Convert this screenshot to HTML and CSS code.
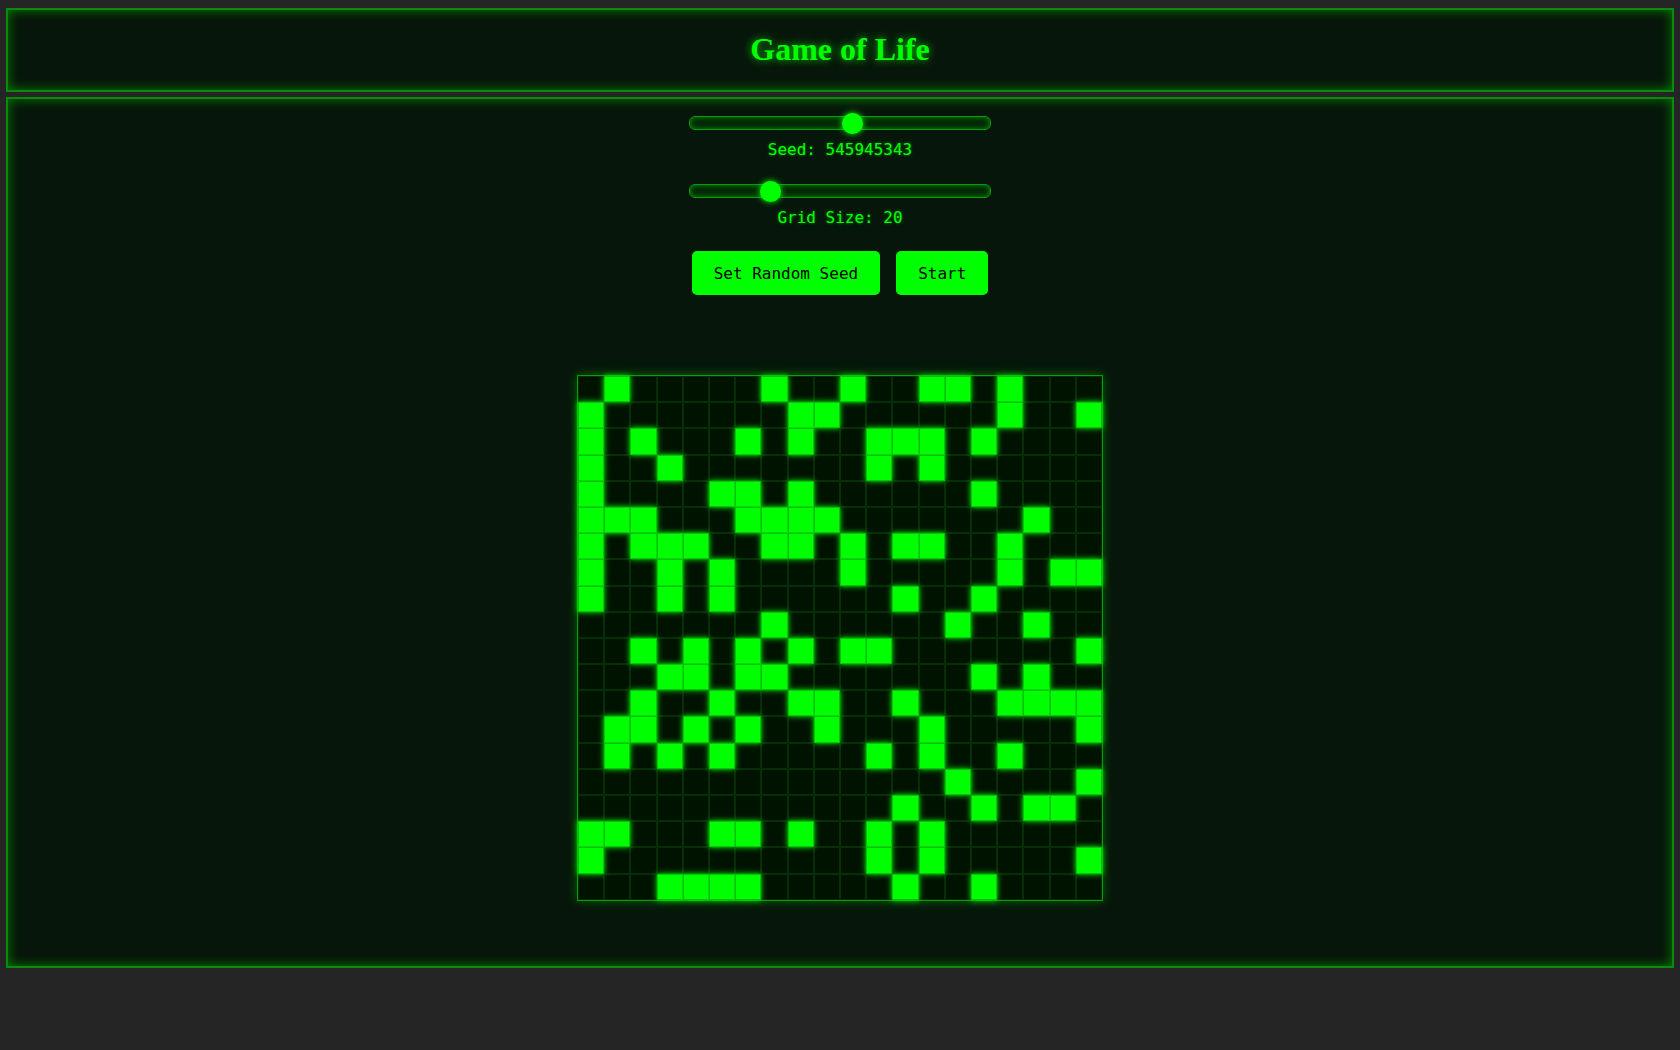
FILE: index.html
```html
<!DOCTYPE html>
<html lang="en">
<head>
<meta charset="utf-8">
<title>Game of Life</title>
<link rel="stylesheet" href="styles.css">
</head>
<body>
<header class="panel header">
  <h1 class="title">Game of Life</h1>
</header>
<main class="panel main">
  <div class="controls">
    <div class="slider-row"><input class="slider" type="range" min="0" max="1000000000" value="545945343"></div>
    <div class="label">Seed: 545945343</div>
    <div class="slider-row second"><input class="slider" type="range" min="10" max="50" value="20"></div>
    <div class="label">Grid Size: 20</div>
    <div class="buttons">
      <button class="btn">Set Random Seed</button>
      <button class="btn">Start</button>
    </div>
  </div>
  <div class="grid-wrap">
    <div class="grid">
<i class="c"></i><i class="c on"></i><i class="c"></i><i class="c"></i><i class="c"></i><i class="c"></i><i class="c"></i><i class="c on"></i><i class="c"></i><i class="c"></i><i class="c on"></i><i class="c"></i><i class="c"></i><i class="c on"></i><i class="c on"></i><i class="c"></i><i class="c on"></i><i class="c"></i><i class="c"></i><i class="c"></i>
<i class="c on"></i><i class="c"></i><i class="c"></i><i class="c"></i><i class="c"></i><i class="c"></i><i class="c"></i><i class="c"></i><i class="c on"></i><i class="c on"></i><i class="c"></i><i class="c"></i><i class="c"></i><i class="c"></i><i class="c"></i><i class="c"></i><i class="c on"></i><i class="c"></i><i class="c"></i><i class="c on"></i>
<i class="c on"></i><i class="c"></i><i class="c on"></i><i class="c"></i><i class="c"></i><i class="c"></i><i class="c on"></i><i class="c"></i><i class="c on"></i><i class="c"></i><i class="c"></i><i class="c on"></i><i class="c on"></i><i class="c on"></i><i class="c"></i><i class="c on"></i><i class="c"></i><i class="c"></i><i class="c"></i><i class="c"></i>
<i class="c on"></i><i class="c"></i><i class="c"></i><i class="c on"></i><i class="c"></i><i class="c"></i><i class="c"></i><i class="c"></i><i class="c"></i><i class="c"></i><i class="c"></i><i class="c on"></i><i class="c"></i><i class="c on"></i><i class="c"></i><i class="c"></i><i class="c"></i><i class="c"></i><i class="c"></i><i class="c"></i>
<i class="c on"></i><i class="c"></i><i class="c"></i><i class="c"></i><i class="c"></i><i class="c on"></i><i class="c on"></i><i class="c"></i><i class="c on"></i><i class="c"></i><i class="c"></i><i class="c"></i><i class="c"></i><i class="c"></i><i class="c"></i><i class="c on"></i><i class="c"></i><i class="c"></i><i class="c"></i><i class="c"></i>
<i class="c on"></i><i class="c on"></i><i class="c on"></i><i class="c"></i><i class="c"></i><i class="c"></i><i class="c on"></i><i class="c on"></i><i class="c on"></i><i class="c on"></i><i class="c"></i><i class="c"></i><i class="c"></i><i class="c"></i><i class="c"></i><i class="c"></i><i class="c"></i><i class="c on"></i><i class="c"></i><i class="c"></i>
<i class="c on"></i><i class="c"></i><i class="c on"></i><i class="c on"></i><i class="c on"></i><i class="c"></i><i class="c"></i><i class="c on"></i><i class="c on"></i><i class="c"></i><i class="c on"></i><i class="c"></i><i class="c on"></i><i class="c on"></i><i class="c"></i><i class="c"></i><i class="c on"></i><i class="c"></i><i class="c"></i><i class="c"></i>
<i class="c on"></i><i class="c"></i><i class="c"></i><i class="c on"></i><i class="c"></i><i class="c on"></i><i class="c"></i><i class="c"></i><i class="c"></i><i class="c"></i><i class="c on"></i><i class="c"></i><i class="c"></i><i class="c"></i><i class="c"></i><i class="c"></i><i class="c on"></i><i class="c"></i><i class="c on"></i><i class="c on"></i>
<i class="c on"></i><i class="c"></i><i class="c"></i><i class="c on"></i><i class="c"></i><i class="c on"></i><i class="c"></i><i class="c"></i><i class="c"></i><i class="c"></i><i class="c"></i><i class="c"></i><i class="c on"></i><i class="c"></i><i class="c"></i><i class="c on"></i><i class="c"></i><i class="c"></i><i class="c"></i><i class="c"></i>
<i class="c"></i><i class="c"></i><i class="c"></i><i class="c"></i><i class="c"></i><i class="c"></i><i class="c"></i><i class="c on"></i><i class="c"></i><i class="c"></i><i class="c"></i><i class="c"></i><i class="c"></i><i class="c"></i><i class="c on"></i><i class="c"></i><i class="c"></i><i class="c on"></i><i class="c"></i><i class="c"></i>
<i class="c"></i><i class="c"></i><i class="c on"></i><i class="c"></i><i class="c on"></i><i class="c"></i><i class="c on"></i><i class="c"></i><i class="c on"></i><i class="c"></i><i class="c on"></i><i class="c on"></i><i class="c"></i><i class="c"></i><i class="c"></i><i class="c"></i><i class="c"></i><i class="c"></i><i class="c"></i><i class="c on"></i>
<i class="c"></i><i class="c"></i><i class="c"></i><i class="c on"></i><i class="c on"></i><i class="c"></i><i class="c on"></i><i class="c on"></i><i class="c"></i><i class="c"></i><i class="c"></i><i class="c"></i><i class="c"></i><i class="c"></i><i class="c"></i><i class="c on"></i><i class="c"></i><i class="c on"></i><i class="c"></i><i class="c"></i>
<i class="c"></i><i class="c"></i><i class="c on"></i><i class="c"></i><i class="c"></i><i class="c on"></i><i class="c"></i><i class="c"></i><i class="c on"></i><i class="c on"></i><i class="c"></i><i class="c"></i><i class="c on"></i><i class="c"></i><i class="c"></i><i class="c"></i><i class="c on"></i><i class="c on"></i><i class="c on"></i><i class="c on"></i>
<i class="c"></i><i class="c on"></i><i class="c on"></i><i class="c"></i><i class="c on"></i><i class="c"></i><i class="c on"></i><i class="c"></i><i class="c"></i><i class="c on"></i><i class="c"></i><i class="c"></i><i class="c"></i><i class="c on"></i><i class="c"></i><i class="c"></i><i class="c"></i><i class="c"></i><i class="c"></i><i class="c on"></i>
<i class="c"></i><i class="c on"></i><i class="c"></i><i class="c on"></i><i class="c"></i><i class="c on"></i><i class="c"></i><i class="c"></i><i class="c"></i><i class="c"></i><i class="c"></i><i class="c on"></i><i class="c"></i><i class="c on"></i><i class="c"></i><i class="c"></i><i class="c on"></i><i class="c"></i><i class="c"></i><i class="c"></i>
<i class="c"></i><i class="c"></i><i class="c"></i><i class="c"></i><i class="c"></i><i class="c"></i><i class="c"></i><i class="c"></i><i class="c"></i><i class="c"></i><i class="c"></i><i class="c"></i><i class="c"></i><i class="c"></i><i class="c on"></i><i class="c"></i><i class="c"></i><i class="c"></i><i class="c"></i><i class="c on"></i>
<i class="c"></i><i class="c"></i><i class="c"></i><i class="c"></i><i class="c"></i><i class="c"></i><i class="c"></i><i class="c"></i><i class="c"></i><i class="c"></i><i class="c"></i><i class="c"></i><i class="c on"></i><i class="c"></i><i class="c"></i><i class="c on"></i><i class="c"></i><i class="c on"></i><i class="c on"></i><i class="c"></i>
<i class="c on"></i><i class="c on"></i><i class="c"></i><i class="c"></i><i class="c"></i><i class="c on"></i><i class="c on"></i><i class="c"></i><i class="c on"></i><i class="c"></i><i class="c"></i><i class="c on"></i><i class="c"></i><i class="c on"></i><i class="c"></i><i class="c"></i><i class="c"></i><i class="c"></i><i class="c"></i><i class="c"></i>
<i class="c on"></i><i class="c"></i><i class="c"></i><i class="c"></i><i class="c"></i><i class="c"></i><i class="c"></i><i class="c"></i><i class="c"></i><i class="c"></i><i class="c"></i><i class="c on"></i><i class="c"></i><i class="c on"></i><i class="c"></i><i class="c"></i><i class="c"></i><i class="c"></i><i class="c"></i><i class="c on"></i>
<i class="c"></i><i class="c"></i><i class="c"></i><i class="c on"></i><i class="c on"></i><i class="c on"></i><i class="c on"></i><i class="c"></i><i class="c"></i><i class="c"></i><i class="c"></i><i class="c"></i><i class="c on"></i><i class="c"></i><i class="c"></i><i class="c on"></i><i class="c"></i><i class="c"></i><i class="c"></i><i class="c"></i>
    </div>
  </div>
</main>
</body>
</html>
```
FILE: styles.css
```css
html, body {
  margin: 0;
  background: #252525;
}
body {
  padding: 8px 6px;
  font-family: "Liberation Serif", serif;
}
.panel {
  background: #07160a;
  border: 2px solid #0a8c0a;
  box-shadow: inset 0 0 12px rgba(0, 255, 0, 0.45);
}
.header {
  margin: 0 0 5px;
  text-align: center;
}
.title {
  margin: 21px 0 22px;
  font-size: 32px;
  line-height: 37px;
  font-weight: bold;
  color: #00ff00;
  text-shadow: 0 0 8px rgba(0, 255, 0, 0.8);
}
.main {
  padding: 14px 0 65px;
}
.controls {
  display: flex;
  flex-direction: column;
  align-items: center;
  font-family: "DejaVu Sans Mono", monospace;
  font-size: 16px;
}
.slider-row {
  height: 20px;
  display: flex;
  align-items: center;
}
.slider-row.second {
  margin-top: 22px;
}
.slider {
  -webkit-appearance: none;
  appearance: none;
  width: 300px;
  height: 12px;
  margin: 0;
  padding: 0;
  background: #032a05;
  border: 1px solid #0a9a0a;
  border-radius: 6px;
  box-shadow: inset 0 0 5px rgba(0, 255, 0, 0.5);
  outline: none;
}
.slider::-webkit-slider-thumb {
  -webkit-appearance: none;
  appearance: none;
  width: 21px;
  height: 21px;
  border-radius: 50%;
  background: #00ff00;
  border: none;
  box-shadow: 0 0 6px #00ff00;
}
.label {
  margin-top: 7px;
  line-height: 19px;
  color: #00ff00;
  text-shadow: 0 0 3px rgba(0, 255, 0, 0.5);
}
.buttons {
  display: flex;
  gap: 16px;
  margin-top: 24px;
}
.btn {
  height: 44px;
  padding: 0 22px;
  border: none;
  border-radius: 5px;
  background: #00ff00;
  color: #000;
  font-family: "DejaVu Sans Mono", monospace;
  font-size: 16px;
}
.grid-wrap {
  display: flex;
  justify-content: center;
  margin-top: 80px;
}
.grid {
  display: grid;
  grid-template-columns: repeat(20, 1fr);
  grid-auto-rows: 26.2px;
  width: 524px;
  border: 1px solid #0a9a0a;
  background: #001200;
  box-shadow: 0 0 10px rgba(0, 255, 0, 0.35);
}
.c {
  display: block;
  border: 1px solid #072f07;
  background: #001200;
}
.c.on {
  background: #00ff00;
  border-color: #08c008;
  box-shadow: 0 0 6px #00ff00;
  position: relative;
}
```
